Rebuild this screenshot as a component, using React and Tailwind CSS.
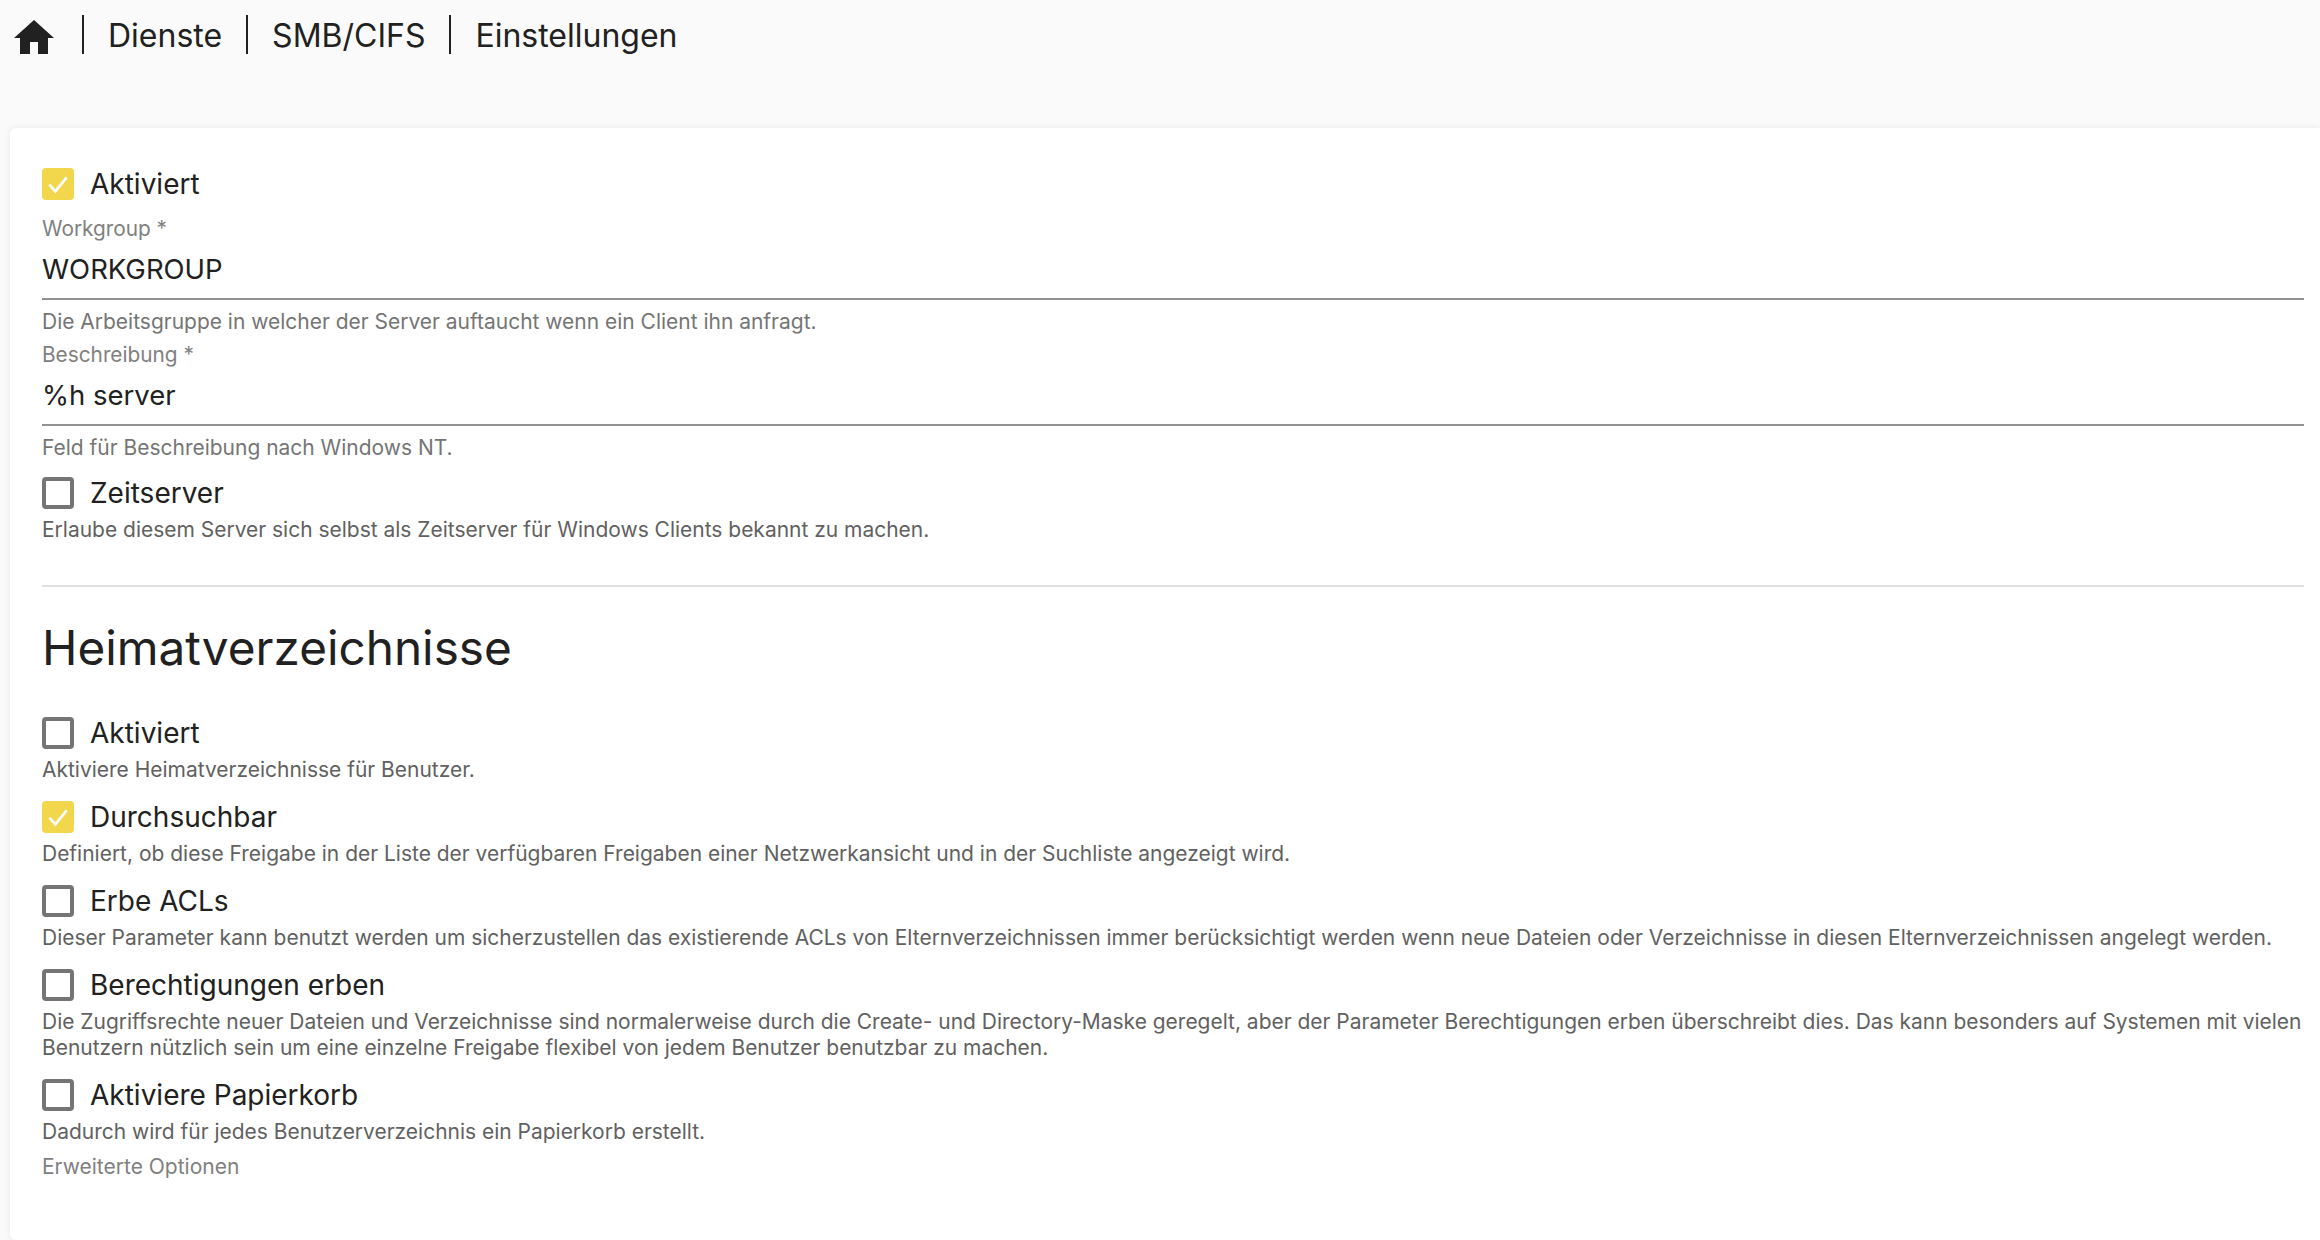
import React from "react";

const Check = ({ checked }) =>
  checked ? (
    <span className="flex h-8 w-8 shrink-0 items-center justify-center rounded bg-[#f2d64b]">
      <svg viewBox="0 0 24 24" className="h-8 w-8" fill="none" stroke="#fff" strokeWidth="2">
        <path d="M5.5 12.5l4.5 5L18.5 7" />
      </svg>
    </span>
  ) : (
    <span className="h-8 w-8 shrink-0 rounded border-[4px] border-[#757575]" />
  );

const CheckRow = ({ label, checked, help }) => (
  <div>
    <div className="flex h-12 items-center gap-4 text-[28px] text-[#212121]">
      <Check checked={checked} />
      <span>{label}</span>
    </div>
    {help && <p className="text-[20.97px] leading-[26px] text-[#616161]">{help}</p>}
  </div>
);

const Field = ({ label, value, help }) => (
  <div>
    <div className="text-[20.8px] leading-[26px] text-[#808080]">{label}</div>
    <div className="mt-[10px] h-[48px] border-b-2 border-[#919191] text-[27.5px] leading-[35px] text-[#212121]">{value}</div>
    <p className="mt-[9px] text-[20.97px] leading-[26px] text-[#757575]">{help}</p>
  </div>
);

const Crumb = ({ children }) => (
  <div className="flex items-center">
    <span className="h-[39px] w-[2px] bg-[#212121]" />
    <span className="px-[24px] pt-[2px] text-[32px] leading-[39px] text-[#212121]">{children}</span>
  </div>
);

export default function App() {
  return (
    <div className="h-[1240px] w-[2320px] overflow-hidden bg-[#fafafa] font-['Inter',sans-serif]">
      <header className="flex h-[128px] items-start pl-[10px] pt-[14px]">
        <svg viewBox="0 0 24 24" className="mr-[24px] h-12 w-12" fill="#212121">
          <path d="M10 20v-6h4v6h5v-8h3L12 3 2 12h3v8z" />
        </svg>
        <Crumb>Dienste</Crumb>
        <Crumb>SMB/CIFS</Crumb>
        <Crumb>Einstellungen</Crumb>
      </header>

      <main className="ml-[10px] h-[1112px] rounded-l-md bg-white pl-8 pr-4 pt-8 shadow-[0_0_6px_rgba(0,0,0,0.08)]">
        <CheckRow label="Aktiviert" checked />
        <div className="mt-2">
          <Field
            label="Workgroup *"
            value="WORKGROUP"
            help="Die Arbeitsgruppe in welcher der Server auftaucht wenn ein Client ihn anfragt."
          />
        </div>
        <div className="mt-[7px]">
          <Field label="Beschreibung *" value="%h server" help="Feld für Beschreibung nach Windows NT." />
        </div>
        <div className="mt-2">
          <CheckRow
            label="Zeitserver"
            help="Erlaube diesem Server sich selbst als Zeitserver für Windows Clients bekannt zu machen."
          />
        </div>

        <hr className="mt-[42px] border-t-2 border-[#e0e0e0]" />
        <h2 className="mt-[32px] text-[47.7px] leading-[58px] text-[#212121]">Heimatverzeichnisse</h2>

        <div className="mt-[32px] flex flex-col gap-[10px]">
          <CheckRow label="Aktiviert" help="Aktiviere Heimatverzeichnisse für Benutzer." />
          <CheckRow
            label="Durchsuchbar"
            checked
            help="Definiert, ob diese Freigabe in der Liste der verfügbaren Freigaben einer Netzwerkansicht und in der Suchliste angezeigt wird."
          />
          <CheckRow
            label="Erbe ACLs"
            help="Dieser Parameter kann benutzt werden um sicherzustellen das existierende ACLs von Elternverzeichnissen immer berücksichtigt werden wenn neue Dateien oder Verzeichnisse in diesen Elternverzeichnissen angelegt werden."
          />
          <CheckRow
            label="Berechtigungen erben"
            help="Die Zugriffsrechte neuer Dateien und Verzeichnisse sind normalerweise durch die Create- und Directory-Maske geregelt, aber der Parameter Berechtigungen erben überschreibt dies. Das kann besonders auf Systemen mit vielen Benutzern nützlich sein um eine einzelne Freigabe flexibel von jedem Benutzer benutzbar zu machen."
          />
          <CheckRow label="Aktiviere Papierkorb" help="Dadurch wird für jedes Benutzerverzeichnis ein Papierkorb erstellt." />
        </div>
        <div className="mt-[9px] text-[21px] leading-[26px] text-[#808080]">Erweiterte Optionen</div>
      </main>
    </div>
  );
}
